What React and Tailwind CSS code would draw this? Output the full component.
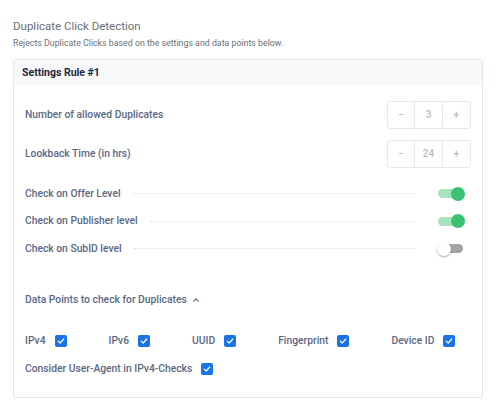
import { useState } from 'react';

const font = { fontFamily: 'Roboto, "Noto Sans", sans-serif' };

const Stepper = ({ value }) => (
  <div className="flex h-[28px] w-[84px] rounded-[3px] border border-[#e6e8ec] text-[10px] text-[#b8bcc4]">
    <button className="flex w-[28px] items-center justify-center border-r border-[#e6e8ec]">−</button>
    <div className="flex w-[28px] items-center justify-center border-r border-[#e6e8ec]">{value}</div>
    <button className="flex w-[28px] items-center justify-center">+</button>
  </div>
);

const Toggle = ({ on, onChange }) => (
  <button onClick={onChange} className="relative flex h-[14px] w-[28px] items-center">
    <span
      className={
        on
          ? 'absolute left-[1px] right-[2px] h-[9px] rounded-full bg-[#a6e2bb]'
          : 'absolute left-[5px] right-[2px] h-[9px] rounded-full bg-[#a3a3a3]'
      }
    />
    <span
      className={
        on
          ? 'absolute right-0 h-[14px] w-[14px] rounded-full bg-[#3cc071]'
          : 'absolute left-0 h-[14px] w-[14px] rounded-full bg-white shadow-[0_1px_2px_rgba(0,0,0,0.35)]'
      }
    />
  </button>
);

const Checkbox = () => (
  <span className="flex h-[12px] w-[12px] items-center justify-center rounded-[2px] bg-[#1a73e8]">
    <svg width="8" height="8" viewBox="0 0 10 10" fill="none">
      <path d="M1.5 5.2 L4 7.5 L8.5 2.5" stroke="white" strokeWidth="1.5" strokeLinecap="round" strokeLinejoin="round" />
    </svg>
  </span>
);

const ToggleRow = ({ label, on, onChange }) => (
  <div className="flex h-[27.5px] items-center">
    <span className="shrink-0">{label}</span>
    <span className="ml-[12px] mr-[21px] flex-1 border-t border-dotted border-[#dde1e6]" />
    <Toggle on={on} onChange={onChange} />
  </div>
);

export default function App() {
  const [toggles, setToggles] = useState({ offer: true, publisher: true, subid: false });
  const flip = (k) => setToggles((t) => ({ ...t, [k]: !t[k] }));

  return (
    <div className="h-[411px] w-[500px] bg-white px-[13px] pt-[18px]" style={font}>
      <h2 className="text-[11.5px] leading-[16px] text-[#6b7078]">Duplicate Click Detection</h2>
      <p className="mt-[3px] text-[8.8px] leading-[12px] text-[#6b7078]">
        Rejects Duplicate Clicks based on the settings and data points below.
      </p>

      {/* settings card */}
      <div className="mt-[10px] h-[339px] w-[470px] rounded-[3px] border border-[#e3e6ea]">
        <div className="flex h-[25px] items-center bg-[#f7f8fa] px-[8px] text-[10.5px] font-bold text-[#1e2840]">
          Settings Rule #1
        </div>

        <div className="pl-[11px] pr-[11px] pt-[16px] text-[10.3px] leading-[14px] font-medium text-[#5b6885]">
          <div className="flex h-[28px] items-center justify-between">
            <span>Number of allowed Duplicates</span>
            <Stepper value={3} />
          </div>
          <div className="mt-[11px] flex h-[28px] items-center justify-between">
            <span>Lookback Time (in hrs)</span>
            <Stepper value={24} />
          </div>

          <div className="mt-[12px] pr-[6px]">
            <ToggleRow label="Check on Offer Level" on={toggles.offer} onChange={() => flip('offer')} />
            <ToggleRow label="Check on Publisher level" on={toggles.publisher} onChange={() => flip('publisher')} />
            <ToggleRow label="Check on SubID level" on={toggles.subid} onChange={() => flip('subid')} />
          </div>

          <div className="mt-[30px] flex items-center gap-[5px]">
            <span>Data Points to check for Duplicates</span>
            <svg width="8" height="8" viewBox="0 0 10 10" fill="none">
              <path d="M2 6.5 L5 3.5 L8 6.5" stroke="#5b6885" strokeWidth="1.4" strokeLinecap="round" strokeLinejoin="round" />
            </svg>
          </div>

          <div className="mt-[27px] flex items-center gap-[42px]">
            {['IPv4', 'IPv6', 'UUID', 'Fingerprint', 'Device ID'].map((name) => (
              <label key={name} className="flex items-center gap-[9px]">
                <span>{name}</span>
                <Checkbox />
              </label>
            ))}
          </div>
          <label className="mt-[14px] flex items-center gap-[9px]">
            <span>Consider User-Agent in IPv4-Checks</span>
            <Checkbox />
          </label>
        </div>
      </div>
    </div>
  );
}
